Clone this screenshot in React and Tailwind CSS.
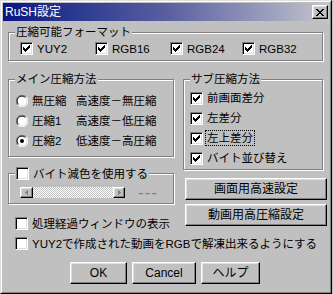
import React from "react";

const CHECK_ROWS = [
  [6, 0, 1],
  [5, 1, 2],
  [0, 2, 1],
  [4, 2, 3],
  [0, 3, 2],
  [3, 3, 3],
  [0, 4, 5],
  [1, 5, 3],
  [2, 6, 1],
];

const CLOSE_ROWS = [
  [0, 0, 2], [6, 0, 2],
  [1, 1, 2], [5, 1, 2],
  [2, 2, 4],
  [3, 3, 2],
  [2, 4, 4],
  [1, 5, 2], [5, 5, 2],
  [0, 6, 2], [6, 6, 2],
];

function Pixels({ rows, w, h, color = "#000" }) {
  return (
    <svg width={w} height={h} viewBox={`0 0 ${w} ${h}`} shapeRendering="crispEdges">
      {rows.map(([x, y, len], i) => (
        <rect key={i} x={x} y={y} width={len} height="1" fill={color} />
      ))}
    </svg>
  );
}

function Check({ checked }) {
  return (
    <span className="flex h-[13px] w-[13px] shrink-0 items-center justify-center border border-t-[#808080] border-l-[#808080] border-r-white border-b-white bg-white shadow-[inset_1px_1px_0_#000,inset_-1px_-1px_0_#dfdfdf]">
      {checked && <Pixels rows={CHECK_ROWS} w={7} h={7} />}
    </span>
  );
}

function Radio({ checked }) {
  return (
    <svg width="12" height="12" viewBox="0 0 12 12" className="shrink-0">
      <circle cx="6" cy="6" r="5.5" fill="#fff" />
      <path d="M10.2 1.8A5.9 5.9 0 0 0 1.8 10.2" stroke="#808080" strokeWidth="1" fill="none" />
      <path d="M9.5 2.5A4.9 4.9 0 0 0 2.5 9.5" stroke="#000" strokeWidth="1" fill="none" />
      <path d="M1.8 10.2A5.9 5.9 0 0 0 10.2 1.8" stroke="#fff" strokeWidth="1" fill="none" />
      <path d="M2.5 9.5A4.9 4.9 0 0 0 9.5 2.5" stroke="#dfdfdf" strokeWidth="1" fill="none" />
      {checked && <circle cx="6" cy="6" r="2" fill="#000" />}
    </svg>
  );
}

function Btn({ className = "", children }) {
  return (
    <div
      className={`flex shrink-0 items-center justify-center border border-t-white border-l-white border-r-black border-b-black bg-[#c0c0c0] leading-[12px] shadow-[inset_-1px_-1px_0_#808080,inset_1px_1px_0_#dfdfdf] ${className}`}
    >
      {children}
    </div>
  );
}

function Group({ label, className = "", children }) {
  return (
    <div className={`relative shrink-0 border border-[#808080] shadow-[inset_1px_1px_0_#fff,1px_1px_0_#fff] ${className}`}>
      <div className="absolute left-[6px] top-[-7px] bg-[#c0c0c0] px-[1px] leading-[12px]">{label}</div>
      {children}
    </div>
  );
}

function CheckRow({ checked, children, className = "" }) {
  return (
    <div className={`flex h-[13px] items-center gap-[4px] leading-[12px] ${className}`}>
      <Check checked={checked} />
      <span className="whitespace-nowrap">{children}</span>
    </div>
  );
}

function RadioRow({ checked, name, desc }) {
  return (
    <div className="flex h-[20px] items-center leading-[12px]">
      <Radio checked={checked} />
      <span className="ml-[4px] w-[44px] whitespace-nowrap">{name}</span>
      <span className="whitespace-nowrap">{desc}</span>
    </div>
  );
}

export default function App() {
  return (
    <div className="h-[294px] w-[333px] bg-[#c0c0c0] font-['Liberation_Sans','Noto_Sans_CJK_JP',sans-serif] text-[11.5px] text-black">
      <div className="h-[294px] w-[332px] border border-t-[#dfdfdf] border-l-[#dfdfdf] border-r-black border-b-black">
        <div className="flex h-full w-full flex-col border border-t-white border-l-white border-r-[#808080] border-b-[#808080] p-[1px]">
          {/* title bar */}
          <div className="flex h-[18px] shrink-0 items-center justify-between bg-linear-to-r from-[#0a1480] via-[#5a5ea0] to-[#c6c6cc] pl-[2px] pr-[1px]">
            <span className="text-[12px] leading-[12px] text-white">RuSH設定</span>
            <Btn className="h-[14px] w-[16px]">
              <Pixels rows={CLOSE_ROWS} w={8} h={7} />
            </Btn>
          </div>

          <div className="flex flex-col pl-[5px]">
            <Group label="圧縮可能フォーマット" className="mt-[11px] h-[29px] w-[315px]">
              <div className="flex pl-[11px] pt-[9px]">
                <CheckRow checked className="w-[75px]">YUY2</CheckRow>
                <CheckRow checked className="w-[75px]">RGB16</CheckRow>
                <CheckRow checked className="w-[72px]">RGB24</CheckRow>
                <CheckRow checked>RGB32</CheckRow>
              </div>
            </Group>

            <div className="mt-[18px] flex gap-[9px]">
              <div className="flex w-[166px] flex-col">
                <Group label="メイン圧縮方法" className="h-[78px] w-[166px]">
                  <div className="flex flex-col pl-[7px] pt-[11px]">
                    <RadioRow name="無圧縮" desc="高速度－無圧縮" />
                    <RadioRow name="圧縮1" desc="高速度－低圧縮" />
                    <RadioRow checked name="圧縮2" desc="低速度－高圧縮" />
                  </div>
                </Group>

                <Group
                  label={
                    <span className="flex items-center gap-[4px]">
                      <Check />
                      <span>バイト減色を使用する</span>
                    </span>
                  }
                  className="mt-[16px] h-[31px] w-[166px]"
                >
                  <div className="flex items-center pl-[11px] pt-[13px]">
                    <div className="flex h-[11px] w-[105px]">
                      <Btn className="h-[11px] w-[13px]">
                        <svg width="3" height="5" viewBox="0 0 3 5" shapeRendering="crispEdges">
                          <path d="M2 0h1v5h-1v-1h-1v-1h-1v-1h1v-1h1z" fill="#808080" />
                        </svg>
                      </Btn>
                      <div className="flex-1 bg-[image:repeating-conic-gradient(#fff_0_25%,#c0c0c0_0_50%)] bg-[length:2px_2px]" />
                      <Btn className="h-[11px] w-[12px]">
                        <svg width="3" height="5" viewBox="0 0 3 5" shapeRendering="crispEdges">
                          <path d="M0 0h1v1h1v1h1v1h-1v1h-1v1h-1z" fill="#808080" />
                        </svg>
                      </Btn>
                    </div>
                    <span className="ml-[13px] text-[17px] leading-[11px] tracking-[1px] text-[#808080]">---</span>
                  </div>
                </Group>

                <CheckRow className="ml-[7px] mt-[13px]">処理経過ウィンドウの表示</CheckRow>
              </div>

              <div className="flex w-[140px] flex-col">
                <Group label="サブ圧縮方法" className="h-[91px] w-[140px]">
                  <div className="flex flex-col pl-[6px] pt-[8px]">
                    <CheckRow checked className="h-[20px]">前画面差分</CheckRow>
                    <CheckRow checked className="h-[20px]">左差分</CheckRow>
                    <div className="flex h-[20px] items-center gap-[4px] leading-[12px]">
                      <Check checked />
                      <span className="whitespace-nowrap outline-1 outline-offset-1 outline-dotted outline-black">
                        左上差分
                      </span>
                    </div>
                    <CheckRow checked className="h-[20px]">バイト並び替え</CheckRow>
                  </div>
                </Group>
                <Btn className="ml-[2px] mt-[8px] h-[22px] w-[142px] text-[12px]">画面用高速設定</Btn>
                <Btn className="ml-[2px] mt-[4px] h-[22px] w-[142px] text-[12px]">動画用高圧縮設定</Btn>
              </div>
            </div>

            <CheckRow className="ml-[7px] mt-[7px]">YUY2で作成された動画をRGBで解凍出来るようにする</CheckRow>

            <div className="ml-[62px] mt-[12px] flex gap-[5px] text-[12px]">
              <Btn className="h-[22px] w-[57px]">OK</Btn>
              <Btn className="h-[22px] w-[64px]">Cancel</Btn>
              <Btn className="h-[22px] w-[59px]">ヘルプ</Btn>
            </div>
          </div>
        </div>
      </div>
    </div>
  );
}
